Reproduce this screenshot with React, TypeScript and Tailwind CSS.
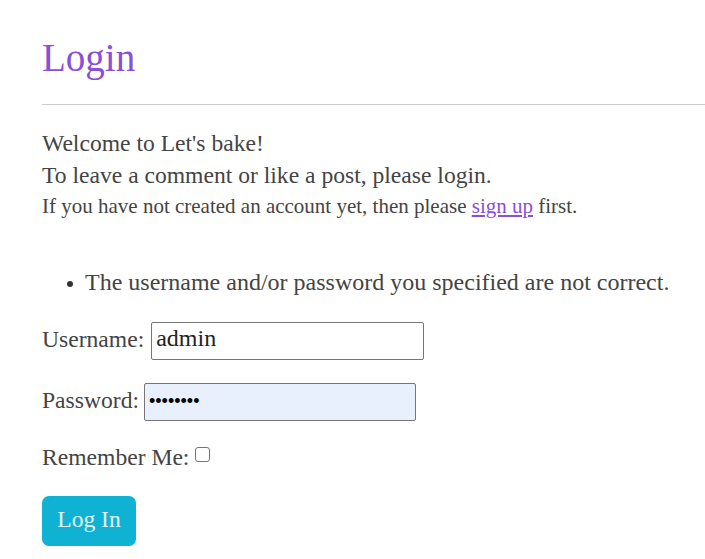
import React from "react";

export default function App() {
  return (
    <div className="min-h-[559px] w-full bg-white text-[#444] font-['Liberation_Serif',serif] overflow-hidden whitespace-nowrap">
      <div className="pt-[34px]">
        <h1 className="pl-[42px] text-[39px] leading-[47px] font-normal text-[#8a4fd8]">Login</h1>
        <div className="ml-[42px] mt-[23px] border-t border-[#cccccc]" />
        <div className="pl-[42px]">
          <p className="mt-[22px] text-[23.6px] leading-[32px]">
            Welcome to Let's bake!
            <br />
            To leave a comment or like a post, please login.
          </p>
          <p className="text-[21px] leading-[31px]">
            If you have not created an account yet, then please{" "}
            <a href="#" className="text-[#8a4fd8] underline">sign up</a> first.
          </p>

          <ul className="mt-[44px]">
            <li className="flex items-start text-[24px] leading-[32px]">
              <span className="ml-[25px] mt-[15px] w-[6px] h-[6px] rounded-full bg-[#333]" />
              <span className="ml-[12px]">The username and/or password you specified are not correct.</span>
            </li>
          </ul>

          <form className="mt-[24px]" onSubmit={(e) => e.preventDefault()}>
            <div className="flex items-start h-[38px]">
              <label className="mt-[1px] text-[23.6px] leading-[32px]">Username:</label>
              <input
                type="text"
                defaultValue="admin"
                className="ml-[7px] w-[273px] h-[38px] px-[4px] pt-0 pb-[5px] border border-[#767676] rounded-[2px] bg-white text-[24px] text-[#222] font-['Liberation_Serif',serif] outline-none"
              />
            </div>
            <div className="flex items-start h-[38px] mt-[23px]">
              <label className="mt-[1px] text-[23.6px] leading-[32px]">Password:</label>
              <input
                type="password"
                defaultValue="password"
                className="ml-[5px] w-[272px] h-[38px] px-[4px] pt-0 pb-[2px] border border-[#767676] rounded-[2px] bg-[#e8f0fe] text-[18px] text-black font-['Liberation_Sans',sans-serif] outline-none"
              />
            </div>
            <div className="flex items-start mt-[20px]">
              <label className="text-[23.6px] leading-[32px]">Remember Me:</label>
              <input
                type="checkbox"
                className="ml-[6px] mt-[6px] w-[15px] h-[15px] appearance-none border border-[#767676] rounded-[3px] bg-white"
              />
            </div>
            <button
              type="submit"
              className="mt-[23px] w-[94px] h-[50px] pb-[4px] rounded-[7px] bg-[#0fb2d3] text-[#e2f7fb] text-[23.6px] leading-[32px] font-['Liberation_Serif',serif] flex items-center justify-center"
            >
              Log In
            </button>
          </form>
        </div>
      </div>
    </div>
  );
}
